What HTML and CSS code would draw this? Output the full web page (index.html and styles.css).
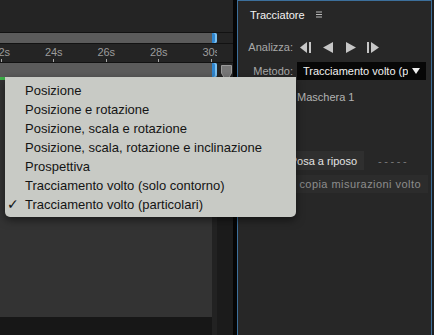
FILE: index.html
```html
<!DOCTYPE html>
<html lang="it">
<head>
    <meta charset="UTF-8">
    <title>Tracciatore</title>
    <link rel="stylesheet" href="styles.css">
</head>
<body>

<div class="comp">
    <div class="comp-top"></div>
    <div class="range">
        <div class="bar"></div>
        <div class="handle"></div>
    </div>
    <div class="ruler">
        <div class="ruler-inner">
            <div class="mark"><span>22s</span><i></i></div>
            <div class="mark"><span>24s</span><i></i></div>
            <div class="mark"><span>26s</span><i></i></div>
            <div class="mark"><span>28s</span><i></i></div>
            <div class="mark"><span>30s</span><i></i></div>
        </div>
    </div>
    <div class="work">
        <div class="bar"></div>
        <div class="handle"></div>
        <svg class="marker" width="11" height="13" viewBox="0 0 11 13">
            <path d="M0.5 0.5H10.5V8L8 12.5H3L0.5 8Z" fill="#777" stroke="#9a9a9a"/>
        </svg>
    </div>
    <div class="tracks">
        <div class="track-area">
            <div class="lane"><div class="playhead"></div></div>
            <div class="footer"></div>
        </div>
        <div class="edge"></div>
        <div class="scroll"></div>
    </div>
</div>

<div class="divider"></div>

<div class="panel">
    <div class="panel-title">
        <span>Tracciatore</span>
        <svg width="6" height="7" viewBox="0 0 6 7">
            <path d="M0 1H6M0 3.5H6M0 6H6" stroke="#bbb" stroke-width="1"/>
        </svg>
    </div>

    <div class="field analyze">
        <span class="field-label">Analizza:</span>
        <div class="transport">
            <svg width="12" height="11" viewBox="0 0 12 11"><path d="M7 0V11L0 5.5Z"/><rect x="9" y="0" width="2" height="11"/></svg>
            <svg width="11" height="11" viewBox="0 0 11 11"><path d="M10 0V11L0 5.5Z"/></svg>
            <svg width="11" height="11" viewBox="0 0 11 11"><path d="M1 0V11L11 5.5Z"/></svg>
            <svg width="12" height="11" viewBox="0 0 12 11"><rect x="0" y="0" width="2" height="11"/><path d="M4 0V11L12 5.5Z"/></svg>
        </div>
    </div>

    <div class="field method">
        <span class="field-label">Metodo:</span>
        <div class="select">
            <span class="select-text">Tracciamento volto (particolari)</span>
            <svg width="8" height="6" viewBox="0 0 8 6"><path d="M0 0H8L4 6Z" fill="#eee"/></svg>
        </div>
    </div>

    <div class="field mask">
        <span class="field-label"></span>
        <span class="mask-name">Maschera 1</span>
    </div>

    <div class="action pose">
        <div class="btn">Posa a riposo</div>
        <span class="dashes">-----</span>
    </div>

    <div class="action copy">
        <div class="btn">copia misurazioni volto</div>
    </div>
</div>

<div class="rest"></div>

<div class="menu">
    <div class="menu-item">Posizione</div>
    <div class="menu-item">Posizione e rotazione</div>
    <div class="menu-item">Posizione, scala e rotazione</div>
    <div class="menu-item">Posizione, scala, rotazione e inclinazione</div>
    <div class="menu-item">Prospettiva</div>
    <div class="menu-item">Tracciamento volto (solo contorno)</div>
    <div class="menu-item checked">Tracciamento volto (particolari)</div>
</div>

</body>
</html>
```

FILE: styles.css
```css
body {
    margin: 0;
    width: 434px;
    height: 335px;
    overflow: hidden;
    display: flex;
    position: relative;
    background-color: #1e1e1e;
    font-family: 'Liberation Sans', Arial, sans-serif;
    font-size: 11px;
}
.comp {
    width: 233px;
    display: flex;
    flex-direction: column;
    background-color: #242424;
}
.comp-top {
    height: 32px;
}
.range {
    height: 10px;
    display: flex;
    border-top: 1px solid #121212;
    border-bottom: 1px solid #121212;
}
.bar {
    width: 212px;
    background-color: #5b5b5b;
}
.handle {
    width: 5px;
    background-color: #2f86cf;
    border-radius: 0 2px 2px 0;
    box-shadow: inset -2px 0 0 #7cc0f0;
}
.ruler {
    width: 217px;
    height: 18px;
    overflow: hidden;
}
.ruler-inner {
    display: flex;
    margin-left: -25px;
}
.mark {
    width: 52.5px;
    flex-shrink: 0;
    display: flex;
    flex-direction: column;
    align-items: center;
    padding-top: 2px;
}
.mark span {
    line-height: 12px;
    color: #9c9c9c;
}
.mark i {
    width: 1px;
    height: 4px;
    margin-top: 1px;
    background-color: #a8a8a8;
}
.work {
    height: 14px;
    display: flex;
    border-top: 1px solid #121212;
}
.marker {
    margin: 2px 0 0 4px;
}
.tracks {
    flex: 1;
    display: flex;
}
.track-area {
    width: 212px;
    display: flex;
    flex-direction: column;
}
.lane {
    height: 240px;
    background-color: #333;
}
.playhead {
    width: 6px;
    height: 3px;
    background-color: #3fb34a;
}
.footer {
    flex: 1;
    background-color: #171717;
}
.edge {
    width: 5px;
    background-color: #222;
}
.scroll {
    width: 16px;
    background-color: #1b1b1b;
}
.divider {
    width: 4px;
    background-color: #050505;
}
.panel {
    width: 195px;
    box-sizing: border-box;
    border: 1px solid #3c6f9b;
    border-bottom: none;
    background-color: #272727;
    display: flex;
    flex-direction: column;
}
.panel-title {
    height: 27px;
    display: flex;
    align-items: center;
    gap: 11px;
    padding-left: 12px;
    color: #f4f4f4;
}
.field {
    display: flex;
    align-items: center;
    gap: 4px;
    padding-left: 8px;
}
.field-label {
    width: 47px;
    flex-shrink: 0;
    text-align: right;
    color: #a9a9a9;
}
.analyze {
    height: 22px;
    margin-top: 8px;
}
.transport {
    display: flex;
    gap: 11px;
    margin-left: 3px;
    fill: #c6c6c6;
}
.method {
    height: 18px;
    margin-top: 4px;
}
.select {
    width: 129px;
    height: 18px;
    box-sizing: border-box;
    display: flex;
    align-items: center;
    gap: 4px;
    padding: 0 6px;
    background-color: #070707;
    color: #f2f2f2;
}
.select-text {
    flex: 1;
    overflow: hidden;
    white-space: nowrap;
}
.mask {
    height: 18px;
    margin-top: 8px;
}
.mask-name {
    color: #b3b3b3;
}
.action {
    display: flex;
    align-items: center;
}
.btn {
    box-sizing: border-box;
    display: flex;
    align-items: center;
    justify-content: flex-end;
    padding-right: 7px;
    white-space: nowrap;
}
.pose {
    height: 19px;
    margin-top: 45px;
    padding-left: 44px;
}
.pose .btn {
    width: 82px;
    height: 19px;
    background-color: #2f2f2f;
    color: #e4e4e4;
}
.dashes {
    margin-left: 14px;
    letter-spacing: 2.6px;
    color: #7a7a7a;
}
.copy {
    height: 18px;
    margin-top: 5px;
    padding-left: 12px;
}
.copy .btn {
    width: 178px;
    height: 18px;
    letter-spacing: 0.45px;
    background-color: #2c2c2c;
    color: #8d8d8d;
}
.rest {
    flex: 1;
    background-color: #1e1e1e;
}
.menu {
    position: absolute;
    left: 5px;
    top: 77px;
    width: 291px;
    padding: 4px 0 3px;
    background-color: #c8cac5;
    border-radius: 0 0 5px 5px;
    box-shadow: 0 3px 8px rgba(0, 0, 0, 0.5);
}
.menu-item {
    position: relative;
    height: 19px;
    line-height: 19px;
    padding-left: 20px;
    font-size: 13px;
    color: #141414;
    white-space: nowrap;
}
.menu-item.checked::before {
    content: '\2713';
    position: absolute;
    left: 2px;
    font-family: 'DejaVu Sans', sans-serif;
    font-size: 14px;
}
```
